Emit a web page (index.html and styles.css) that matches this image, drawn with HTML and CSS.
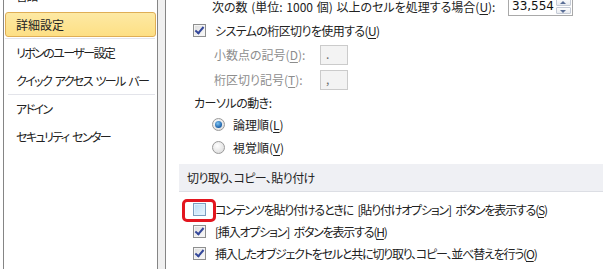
FILE: index.html
```html
<!DOCTYPE html>
<html lang="ja">
<head>
  <meta charset="UTF-8">
  <title>Excel のオプション - 詳細設定</title>
  <link rel="stylesheet" href="styles.css">
</head>
<body>
  <div class="window">

    <!-- 左側のカテゴリ一覧 -->
    <div class="nav">
      <ul class="nav-list">
        <li class="nav-item">言語</li>
        <li class="nav-item selected"><span class="nav-box">詳細設定</span></li>
        <li class="nav-sep"></li>
        <li class="nav-item">リボンのユーザー設定</li>
        <li class="nav-item">クイック アクセス ツール バー</li>
        <li class="nav-sep second"></li>
        <li class="nav-item">アドイン</li>
        <li class="nav-item">セキュリティ センター</li>
      </ul>
    </div>

    <div class="gutter"></div>

    <!-- 右側の設定内容 -->
    <div class="content">
      <div class="row-spin">
        <span class="spin-label">次の数 (単位: 1000 個) 以上のセルを処理する場合(<u>U</u>):</span>
        <div class="spin">
          <span class="spin-value">33,554</span>
          <div class="spin-btns">
            <span class="spin-btn up"></span>
            <span class="spin-btn down"></span>
          </div>
        </div>
      </div>

      <div class="check-row first">
        <span class="checkbox checked"></span>
        <span>システムの桁区切りを使用する(<u>U</u>)</span>
      </div>

      <div class="field-row">
        <span class="field-label">小数点の記号(<u>D</u>):</span>
        <span class="field-box">.</span>
      </div>
      <div class="field-row">
        <span class="field-label">桁区切り記号(<u>T</u>):</span>
        <span class="field-box">,</span>
      </div>

      <div class="group-label">カーソルの動き:</div>
      <div class="radio-row">
        <span class="radio checked"></span>
        <span>論理順(<u>L</u>)</span>
      </div>
      <div class="radio-row">
        <span class="radio"></span>
        <span>視覚順(<u>V</u>)</span>
      </div>

      <div class="section-head">切り取り、コピー、貼り付け</div>

      <div class="check-row paste">
        <span class="checkbox hover"></span>
        <span>コンテンツを貼り付けるときに [貼り付けオプション] ボタンを表示する(<u>S</u>)</span>
        <span class="mark"></span>
      </div>
      <div class="check-row">
        <span class="checkbox checked"></span>
        <span>[挿入オプション] ボタンを表示する(<u>H</u>)</span>
      </div>
      <div class="check-row">
        <span class="checkbox checked"></span>
        <span>挿入したオブジェクトをセルと共に切り取り、コピー、並べ替えを行う(<u>O</u>)</span>
      </div>
    </div>

  </div>
</body>
</html>
```

FILE: styles.css
```css
body {
  margin: 0;
  padding: 0;
  background: #FFFFFF;
  color: #222222;
  font-family: "Noto Sans CJK JP", "Noto Sans", sans-serif;
  font-size: 12px;
  font-feature-settings: "palt";
  letter-spacing: -1px;
  word-spacing: 3px;
  overflow: hidden;
}

u {
  text-decoration-thickness: 1px;
  text-underline-offset: 2px;
}

.window {
  display: flex;
  width: 603px;
  height: 269px;
  overflow: hidden;
}

/* ===== 左のカテゴリ一覧 ===== */
.nav {
  flex: 0 0 155px;
  min-width: 0;
  overflow: hidden;
  margin-left: 3px;
  box-sizing: border-box;
  border-left: 1px solid #858585;
  border-right: 1px solid #858585;
  background: #FFFFFF;
}

.nav-list {
  list-style: none;
  margin: -18px 0 0 0;
  padding: 0;
}

.nav-item {
  height: 28px;
  line-height: 28px;
  padding-left: 12px;
  white-space: nowrap;
  letter-spacing: -1.6px;
  word-spacing: 2.5px;
}

.nav-item.selected {
  padding: 2px 1px 1px 1px;
  height: 25px;
  letter-spacing: 0;
}

.nav-box {
  display: block;
  height: 25px;
  line-height: 23px;
  box-sizing: border-box;
  padding-left: 10px;
  border: 1px solid #dfae55;
  border-radius: 3px;
  background: linear-gradient(#fde9a4, #fddf84);
}

.nav-sep {
  height: 1px;
  margin: 0 2px 0 1px;
  background: #e3e4ea;
}

.nav-sep.second {
  margin: -1px 2px 0 4px;
}

.gutter {
  flex: 0 0 7px;
  background: #f0f0f0;
}

/* ===== 右の設定内容 ===== */
.content {
  position: relative;
  flex: 1;
  min-width: 0;
  border-left: 1px solid #858585;
  display: flex;
  flex-direction: column;
  white-space: nowrap;
}

.row-spin {
  display: flex;
  align-items: center;
  height: 20px;
  margin-top: -4px;
  padding-left: 46px;
}

.spin-label {
  flex: 0 0 296px;
  letter-spacing: 0;
  word-spacing: 1px;
}

.spin {
  display: flex;
  width: 65px;
  height: 20px;
  box-sizing: border-box;
  border: 1px solid #a9a9a9;
  background: #FFFFFF;
}

.spin-value {
  flex: 1;
  padding-left: 3px;
  line-height: 18px;
  font-family: "DejaVu Sans", sans-serif;
  font-size: 12px;
  letter-spacing: 0;
  color: #111111;
}

.spin-btns {
  display: flex;
  flex-direction: column;
  gap: 1px;
  width: 15px;
  padding: 1px 1px 1px 0;
}

.spin-btn {
  position: relative;
  flex: 1;
  border: 1px solid #c5cbd6;
  border-radius: 1px;
  background: linear-gradient(#fdfdfd, #e8ebf0);
}

.spin-btn::after {
  content: "";
  position: absolute;
  left: 3px;
  border-left: 3px solid transparent;
  border-right: 3px solid transparent;
}

.spin-btn.up::after {
  top: 2px;
  border-bottom: 3px solid #5a6e96;
}

.spin-btn.down::after {
  top: 2px;
  border-top: 3px solid #5a6e96;
}

.check-row {
  position: relative;
  display: flex;
  align-items: center;
  gap: 9px;
  height: 22px;
  padding-left: 27px;
  letter-spacing: -1.2px;
}

.check-row.first {
  height: 20px;
  margin-top: 4px;
  letter-spacing: -0.6px;
}

.checkbox {
  flex: 0 0 13px;
  height: 13px;
  box-sizing: border-box;
  border: 1px solid #8e8f8f;
  background: linear-gradient(135deg, #dcdcdc, #fbfbfb);
  box-shadow: inset 0 0 0 1px #f4f4f4;
  position: relative;
}

.checkbox.checked::after {
  content: "";
  position: absolute;
  left: 3px;
  top: 0px;
  width: 3px;
  height: 7px;
  border-right: 2px solid #33479a;
  border-bottom: 2px solid #33479a;
  transform: rotate(40deg);
}

.checkbox.hover {
  border-color: #7b9ebf;
  background: linear-gradient(135deg, #b8dcf6, #eaf6fd);
  box-shadow: inset 0 0 0 1px #def0fc;
}

.field-row {
  display: flex;
  align-items: center;
  height: 20px;
  margin-top: 5px;
  padding-left: 48px;
  color: #8d8d8d;
  letter-spacing: 0;
}

.field-label {
  flex: 0 0 106px;
  padding-bottom: 2px;
}

.field-box {
  width: 28px;
  height: 20px;
  box-sizing: border-box;
  border: 1px solid #cbcbcb;
  background: #f3f3f3;
  padding-left: 5px;
  line-height: 16px;
  color: #6d6d6d;
}

.group-label {
  height: 20px;
  line-height: 20px;
  margin-top: 3px;
  padding-left: 28px;
  letter-spacing: -0.5px;
}

.radio-row {
  display: flex;
  align-items: center;
  gap: 8px;
  height: 23px;
  padding-left: 46px;
  letter-spacing: 0;
}

.radio-row:first-of-type {
  margin-top: -2px;
}

.radio {
  flex: 0 0 13px;
  height: 13px;
  box-sizing: border-box;
  border-radius: 50%;
  border: 1px solid #9a9a9a;
  background: radial-gradient(circle at 40% 35%, #ffffff, #d6d6d6);
  position: relative;
}

.radio.checked::after {
  content: "";
  position: absolute;
  left: 2px;
  top: 2px;
  width: 7px;
  height: 7px;
  border-radius: 50%;
  background: radial-gradient(circle at 40% 35%, #7fc4f2, #1a5fa8 70%);
}

.section-head {
  height: 27px;
  line-height: 27px;
  margin: 5px 0 0 13px;
  padding-left: 8px;
  background: #eff0f4;
  border-bottom: 1px solid #dcdee4;
  letter-spacing: -0.6px;
}

.check-row.paste {
  margin-top: 6px;
}

/* 赤い囲み（注釈） */
.mark {
  position: absolute;
  left: 16px;
  top: 1px;
  width: 34px;
  height: 23px;
  box-sizing: border-box;
  border: 3px solid #e3161f;
  border-radius: 5px;
}
```
